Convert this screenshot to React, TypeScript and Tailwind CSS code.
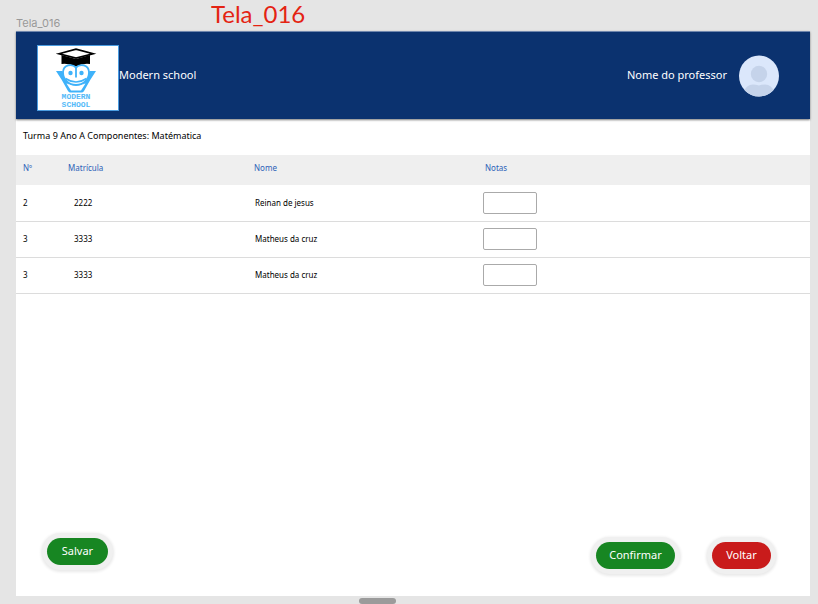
const students = [
  { number: "2", enrollment: "2222", name: "Reinan de jesus" },
  { number: "3", enrollment: "3333", name: "Matheus da cruz" },
  { number: "3", enrollment: "3333", name: "Matheus da cruz" },
];

function Logo() {
  return (
    <div className="flex h-[66px] w-[82px] flex-col items-center border border-[#4a9ce0] bg-white pt-px pr-1">
      <svg width="42" height="46" viewBox="0 0 42 46" fill="none" aria-hidden="true">
        <path d="M6.500 8v9q8-.8 14.500 2.500Q27 16.200 35 17V8L21 12z" fill="#000" />
        <path d="M4 6.800L21 2.200L38 6.800L21 11z" fill="#fff" stroke="#000" strokeWidth="1.700" />
        <path d="M1 24h6.500l2 7.500L17 43h8l7.500-11.500l2-7.500H41l-5.500 8.500L29 44q-.8 1.500-2.500 1.500h-11Q14 45.500 13 44L6.500 32.500z" fill="#3fb2fa" />
        <path
          d="M21 20.500C17 16.500 8.500 17.500 8 25C8 33 14 38 21 38S34 33 34 25C33.500 17.500 25 16.500 21 20.500z"
          fill="#fff"
          stroke="#3fb2fa"
          strokeWidth="1.800"
        />
        <path d="M10.500 31.500q10.500 7 21 0" stroke="#3fb2fa" strokeWidth="1.600" />
        <path d="M21 20.500v10" stroke="#3fb2fa" strokeWidth="1.800" />
        <circle cx="15.500" cy="26" r="2.200" fill="#3fb2fa" />
        <circle cx="26.500" cy="26" r="2.200" fill="#3fb2fa" />
        <path d="M11.500 36.500q9.500 5.500 19 0L26 43.500H16z" fill="#fff" />
      </svg>
      <p className="text-center font-['Liberation_Mono',monospace] text-[8px] leading-[8px] font-bold text-[#55baf8]">
        MODERN
        <br />
        SCHOOL
      </p>
    </div>
  );
}

function Avatar() {
  return (
    <svg width="40" height="42" viewBox="0 0 40 42" role="img" aria-label="Professor">
      <defs>
        <clipPath id="avatar">
          <ellipse cx="20" cy="21" rx="20" ry="20.500" />
        </clipPath>
      </defs>
      <g clipPath="url(#avatar)">
        <path d="M0 0h40v42H0z" fill="#dbe7fb" />
        <circle cx="20" cy="19" r="8.200" fill="#c5d3ea" />
        <path d="M5 42v-5q2-7.500 9-7.500q3 0 6 1q3-1 6-1q7 0 9 7.500v5z" fill="#c5d3ea" />
      </g>
    </svg>
  );
}

const pill =
  "flex h-[27px] items-center justify-center rounded-full text-[11px] text-white shadow-[0_0_0_5px_#f0f0f0,0_1px_3px_6px_#e9e9e9]";

export default function App() {
  return (
    <div className="flex min-h-screen flex-col bg-[#e5e5e5] pr-2 pl-4 font-['Noto_Sans',sans-serif] text-black">
      <div className="flex h-[31px] items-start">
        <p className="w-[195px] pt-4 font-['Inter',sans-serif] text-[11px] leading-[14px] text-[#999999]">Tela_016</p>
        <h1 className="font-['Lato',sans-serif] text-[24px] leading-7 text-[#e42313]">Tela_016</h1>
      </div>

      <main className="flex grow flex-col bg-white">
        <header className="flex h-[88px] items-center justify-between border-t border-[#6f86ac] bg-[#0b326f] pr-[31px] pl-[21px] text-white shadow-[0_1px_2px_#777]">
          <div className="flex items-center pt-1">
            <Logo />
            <span className="pb-1 text-[11px]">Modern school</span>
          </div>
          <div className="flex items-center gap-3">
            <span className="text-[11px]">Nome do professor</span>
            <Avatar />
          </div>
        </header>

        <h2 className="px-[7px] pt-[9px] pb-[11px] text-[9px] leading-4">Turma 9 Ano A Componentes: Matématica</h2>

        <table className="w-full table-fixed border-collapse text-left text-[8px] leading-3">
          <colgroup>
            <col className="w-[45px]" />
            <col className="w-[186px]" />
            <col className="w-[230px]" />
            <col />
          </colgroup>
          <thead>
            <tr className="h-[30px] bg-[#efefef] text-[#2c5fb8]">
              <th className="px-[7px] pb-1 font-normal">Nº</th>
              <th className="px-[7px] pb-1 font-normal">Matrícula</th>
              <th className="px-[7px] pb-1 font-normal">Nome</th>
              <th className="px-2 pb-1 font-normal">Notas</th>
            </tr>
          </thead>
          <tbody>
            {students.map((student, index) => (
              <tr key={index} className="h-9 border-b border-[#dcdcdc]">
                <td className="px-[7px]">{student.number}</td>
                <td className="px-[13px]">{student.enrollment}</td>
                <td className="px-2">{student.name}</td>
                <td className="px-1.5">
                  <input
                    type="text"
                    aria-label={`Nota de ${student.name}`}
                    className="block h-[22px] w-[54px] rounded-xs border border-[#aaaaaa] bg-white px-1"
                  />
                </td>
              </tr>
            ))}
          </tbody>
        </table>

        <footer className="mt-auto flex items-end justify-between pr-[39px] pb-[27px] pl-[31px]">
          <button type="button" className={`${pill} mb-1 w-[61px] bg-[#178622]`}>
            Salvar
          </button>
          <div className="flex gap-[37px]">
            <button type="button" className={`${pill} w-[79px] bg-[#178622]`}>
              Confirmar
            </button>
            <button type="button" className={`${pill} w-[59px] bg-[#c91b1b]`}>
              Voltar
            </button>
          </div>
        </footer>
      </main>

      <div className="flex h-2 items-end pl-[343px]">
        <div className="h-1.5 w-[37px] rounded-full bg-[#9b9b9b]" />
      </div>
    </div>
  );
}
